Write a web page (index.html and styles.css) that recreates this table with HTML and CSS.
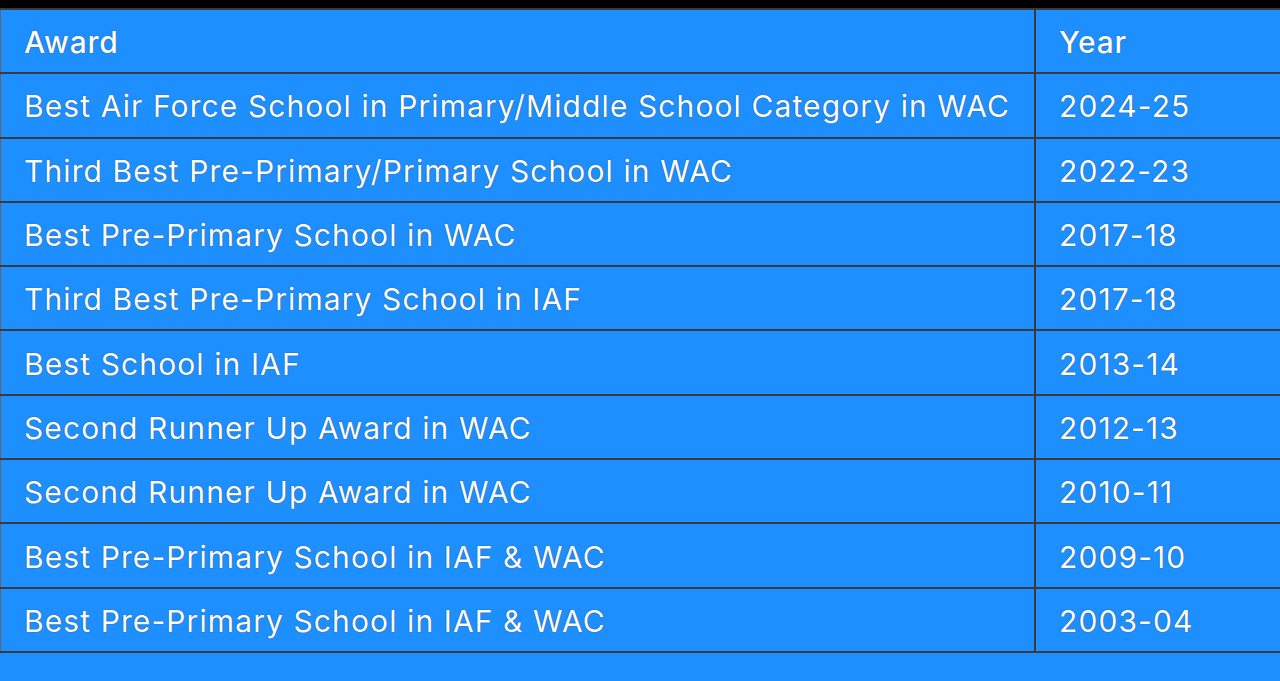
FILE: index.html
```html
<!DOCTYPE html>
<html lang="en">
<head>
<meta charset="utf-8">
<title>Awards</title>
<link rel="stylesheet" href="styles.css">
</head>
<body>
<div class="topbar"></div>
<table class="awards">
  <thead>
    <tr><th class="c-award">Award</th><th class="c-year">Year</th></tr>
  </thead>
  <tbody>
    <tr><td>Best Air Force School in Primary/Middle School Category in WAC</td><td>2024-25</td></tr>
    <tr><td>Third Best Pre-Primary/Primary School in WAC</td><td>2022-23</td></tr>
    <tr><td>Best Pre-Primary School in WAC</td><td>2017-18</td></tr>
    <tr><td>Third Best Pre-Primary School in IAF</td><td>2017-18</td></tr>
    <tr><td>Best School in IAF</td><td>2013-14</td></tr>
    <tr><td>Second Runner Up Award in WAC</td><td>2012-13</td></tr>
    <tr><td>Second Runner Up Award in WAC</td><td>2010-11</td></tr>
    <tr><td>Best Pre-Primary School in IAF &amp; WAC</td><td>2009-10</td></tr>
    <tr><td>Best Pre-Primary School in IAF &amp; WAC</td><td>2003-04</td></tr>
  </tbody>
</table>
</body>
</html>
```
FILE: styles.css
```css
html, body {
  margin: 0;
  padding: 0;
  background: #1e8fff;
  height: 100%;
  overflow: hidden;
}
body {
  font-family: "Inter", "Liberation Sans", sans-serif;
  color: #ffffff;
}
.topbar {
  height: 8px;
  background: #000000;
}
.awards {
  width: 1282px;
  border-collapse: collapse;
  background: #1e8fff;
}
.awards th,
.awards td {
  border: 2px solid #3a3a3a;
  text-align: left;
  padding: 2px 23px 0 23px;
  height: 60.3px;
  font-size: 30px;
  line-height: 34px;
  letter-spacing: 1.1px;
  text-shadow: 0 0 1px rgba(0, 0, 0, 0.7);
  white-space: nowrap;
}
.awards tr > :first-child {
  border-left-width: 1px;
  border-left-color: #666;
}
.awards th {
  font-weight: 500;
  letter-spacing: 0.8px;
}
.awards td {
  font-weight: 400;
}
.c-award {
  width: 987px;
}
```
